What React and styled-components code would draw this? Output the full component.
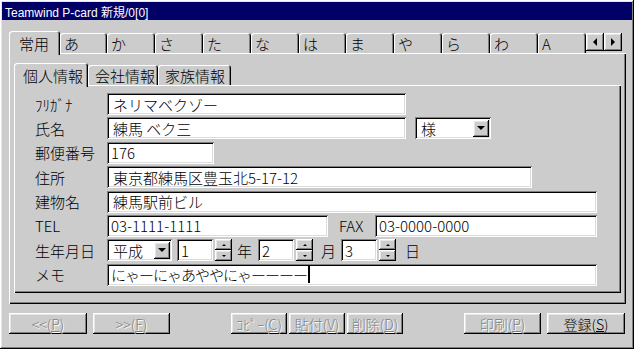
import React from "react";
import styled, { createGlobalStyle } from "styled-components";

const colors = {
  face: "#cccccc",
  light: "#ffffff",
  shadow: "#808080",
  dark: "#000000",
  title: "#000066",
};

const raised = `inset -1px -1px ${colors.dark}, inset 1px 1px ${colors.light}, inset -2px -2px ${colors.shadow}, inset 2px 2px #e6e6e6`;
const sunken = `inset 1px 1px ${colors.shadow}, inset -1px -1px ${colors.light}, inset 2px 2px ${colors.dark}, inset -2px -2px #dcdcdc`;
const panelEdge = `inset 1px 1px ${colors.light}, inset -1px -1px ${colors.dark}, inset -2px -2px ${colors.shadow}`;

const GlobalStyle = createGlobalStyle`
  body {
    margin: 0;
    background: ${colors.face};
    font-family: "Noto Sans CJK JP", "Noto Sans", sans-serif;
    font-weight: 300;
  }
`;

const Window = styled.div`
  width: 634px;
  height: 349px;
  box-sizing: border-box;
  padding: 2px;
  background: ${colors.face};
  box-shadow: ${raised};
  display: flex;
  flex-direction: column;
`;

const TitleBar = styled.div`
  height: 18px;
  flex: 0 0 18px;
  background: ${colors.title};
  color: white;
  font-family: "Liberation Sans", "Noto Sans CJK JP", sans-serif;
  font-weight: 400;
  font-size: 12px;
  display: flex;
  align-items: center;
  padding-left: 3px;
`;

const Body = styled.div`
  flex: 1;
  padding: 11px 6px 0 7px;
  display: flex;
  flex-direction: column;
`;

const TabStrip = styled.div`
  display: flex;
  align-items: flex-end;
  height: 22px;
  flex: 0 0 22px;
`;

const Tab = styled.div`
  box-sizing: border-box;
  width: ${(p) => p.$w}px;
  flex: 0 0 ${(p) => p.$w}px;
  height: ${(p) => (p.$active ? 24 : 20)}px;
  margin-bottom: ${(p) => (p.$active ? -2 : 0)}px;
  padding-left: ${(p) => p.$pad}px;
  padding-top: ${(p) => (p.$active ? 0 : 1)}px;
  display: flex;
  align-items: center;
  font-size: 15px;
  line-height: 1;
  color: #000;
  background: ${colors.face};
  position: relative;
  z-index: ${(p) => (p.$active ? 2 : 1)};
  border-radius: 3px 3px 0 0;
  box-shadow: inset 1px 1px ${colors.light}, inset -1px 0 ${colors.dark},
    inset -2px 0 ${colors.shadow};
`;

const ArrowPair = styled.div`
  display: flex;
  align-self: flex-start;
  margin-top: 2px;
`;

const SmallButton = styled.div`
  box-sizing: border-box;
  width: ${(p) => p.$w}px;
  height: ${(p) => p.$h}px;
  background: ${colors.face};
  box-shadow: ${raised};
  display: flex;
  align-items: center;
  justify-content: center;
  flex: 0 0 auto;
`;

const Panel = styled.div`
  box-sizing: border-box;
  height: ${(p) => p.$h}px;
  flex: 0 0 ${(p) => p.$h}px;
  padding: ${(p) => p.$pad};
  box-shadow: ${panelEdge};
  display: flex;
  flex-direction: column;
`;

const Form = styled.div`
  display: flex;
  flex-direction: column;
  gap: 2.4px;
`;

const Row = styled.div`
  display: flex;
  align-items: center;
  height: 22px;
`;

const Label = styled.div`
  width: ${(p) => p.$w}px;
  flex: 0 0 ${(p) => p.$w}px;
  margin-left: ${(p) => p.$ml || 0}px;
  font-size: ${(p) => p.$size || 15}px;
  line-height: 1;
  color: #000;
`;

const Field = styled.div`
  box-sizing: border-box;
  width: ${(p) => p.$w}px;
  flex: 0 0 ${(p) => p.$w}px;
  height: ${(p) => p.$h || 22}px;
  margin-left: ${(p) => p.$ml || 0}px;
  padding-left: ${(p) => p.$pl || 6}px;
  background: white;
  box-shadow: ${sunken};
  display: flex;
  align-items: center;
  font-size: 15px;
  line-height: 1;
  letter-spacing: ${(p) => p.$ls || 0}px;
  color: #000;
  white-space: nowrap;
  overflow: hidden;
`;

const FieldText = styled.span`
  flex: 1;
`;

const Caret = styled.span`
  display: inline-block;
  width: 2px;
  height: 17px;
  background: #000;
  margin-left: 1px;
  vertical-align: middle;
`;

const DropButton = styled(SmallButton)`
  margin-right: 2px;
`;

const Spinner = styled.div`
  display: flex;
  flex-direction: column;
  margin-left: 2px;
  height: 22px;
`;

const ButtonBar = styled.div`
  display: flex;
  justify-content: space-between;
  margin-top: 9px;
  padding-right: 1px;
`;

const Group = styled.div`
  display: flex;
  gap: ${(p) => p.$gap}px;
`;

const PushButton = styled.div`
  box-sizing: border-box;
  width: ${(p) => p.$w}px;
  height: 21px;
  background: ${colors.face};
  box-shadow: ${raised};
  display: flex;
  align-items: center;
  justify-content: center;
  font-size: 14px;
  line-height: 1;
  padding-top: 1px;
  color: ${(p) => (p.$disabled ? colors.shadow : "#000")};
  text-shadow: ${(p) => (p.$disabled ? "1px 1px 0 #fff" : "none")};
  white-space: nowrap;

  u {
    text-underline-offset: 1px;
  }
`;

const Tri = ({ dir, size = 4 }) => {
  const s = size;
  const pts = {
    left: `${s},0 ${s},${s * 2} 0,${s}`,
    right: `0,0 0,${s * 2} ${s},${s}`,
    down: `0,0 ${s * 2},0 ${s},${s}`,
    up: `0,${s} ${s * 2},${s} ${s},0`,
  }[dir];
  const w = dir === "left" || dir === "right" ? s : s * 2;
  const h = dir === "left" || dir === "right" ? s * 2 : s;
  return (
    <svg width={w} height={h} viewBox={`0 0 ${w} ${h}`}>
      <polygon points={pts} fill="#000" />
    </svg>
  );
};

const kanaTabs = [
  { label: "常用", w: 51, pad: 10, active: true },
  { label: "あ", w: 47 },
  { label: "か", w: 48 },
  { label: "さ", w: 48 },
  { label: "た", w: 48 },
  { label: "な", w: 48 },
  { label: "は", w: 47 },
  { label: "ま", w: 48 },
  { label: "や", w: 48 },
  { label: "ら", w: 48 },
  { label: "わ", w: 48 },
  { label: "A", w: 48 },
];

const infoTabs = [
  { label: "個人情報", w: 74, pad: 9, active: true },
  { label: "会社情報", w: 70, pad: 7 },
  { label: "家族情報", w: 73, pad: 7 },
];

const SpinBox = ({ value, ml }) => (
  <>
    <Field $w={36} $ml={ml} $pl={4}>
      {value}
    </Field>
    <Spinner>
      <SmallButton $w={17} $h={11}>
        <Tri dir="up" size={2} />
      </SmallButton>
      <SmallButton $w={17} $h={11}>
        <Tri dir="down" size={2} />
      </SmallButton>
    </Spinner>
  </>
);

const Combo = ({ value, w, ml }) => (
  <Field $w={w} $ml={ml}>
    <FieldText>{value}</FieldText>
    <DropButton $w={16} $h={17}>
      <Tri dir="down" size={4} />
    </DropButton>
  </Field>
);

export default function App() {
  return (
    <>
      <GlobalStyle />
      <Window>
        <TitleBar>Teamwind P-card 新規/0[0]</TitleBar>
        <Body>
          <TabStrip>
            {kanaTabs.map((t) => (
              <Tab key={t.label} $w={t.w} $pad={t.pad || 4} $active={t.active}>
                {t.label}
              </Tab>
            ))}
            <ArrowPair>
              <SmallButton $w={18} $h={18}>
                <Tri dir="left" size={4} />
              </SmallButton>
              <SmallButton $w={18} $h={18}>
                <Tri dir="right" size={4} />
              </SmallButton>
            </ArrowPair>
          </TabStrip>

          <Panel $h={251} $pad="10px 5px 0 5px">
            <TabStrip>
              {infoTabs.map((t) => (
                <Tab key={t.label} $w={t.w} $pad={t.pad} $active={t.active}>
                  {t.label}
                </Tab>
              ))}
            </TabStrip>
            <Panel $h={208} $pad="8px 0 0 21px">
              <Form>
                <Row>
                  <Label $w={72} $size={15}>ﾌﾘｶﾞﾅ</Label>
                  <Field $w={299}>ネリマベクゾー</Field>
                </Row>
                <Row>
                  <Label $w={72}>氏名</Label>
                  <Field $w={299}>練馬 ベク三</Field>
                  <Combo value="様" w={76} ml={9} />
                </Row>
                <Row>
                  <Label $w={72}>郵便番号</Label>
                  <Field $w={107} $pl={4}>176</Field>
                </Row>
                <Row>
                  <Label $w={72}>住所</Label>
                  <Field $w={425}>東京都練馬区豊玉北5-17-12</Field>
                </Row>
                <Row>
                  <Label $w={72}>建物名</Label>
                  <Field $w={490}>練馬駅前ビル</Field>
                </Row>
                <Row>
                  <Label $w={72}>TEL</Label>
                  <Field $w={221} $pl={4}>03-1111-1111</Field>
                  <Label $w={36} $ml={11}>FAX</Label>
                  <Field $w={222} $pl={4}>03-0000-0000</Field>
                </Row>
                <Row>
                  <Label $w={72}>生年月日</Label>
                  <Combo value="平成" w={65} />
                  <SpinBox value="1" ml={5} />
                  <Label $w={21} $ml={5}>年</Label>
                  <SpinBox value="2" />
                  <Label $w={20} $ml={8}>月</Label>
                  <SpinBox value="3" />
                  <Label $w={20} $ml={9}>日</Label>
                </Row>
                <Row>
                  <Label $w={72}>メモ</Label>
                  <Field $w={490} $pl={4} $ls={-1}>
                    にゃーにゃあややにゃーーーー
                    <Caret />
                  </Field>
                </Row>
              </Form>
            </Panel>
          </Panel>

          <ButtonBar>
            <Group $gap={6}>
              <PushButton $w={78} $disabled>
                &lt;&lt;(<u>P</u>)
              </PushButton>
              <PushButton $w={77} $disabled>
                &gt;&gt;(<u>F</u>)
              </PushButton>
            </Group>
            <Group $gap={2}>
              <PushButton $w={56} $disabled>
                ｺﾋﾟｰ(<u>C</u>)
              </PushButton>
              <PushButton $w={56} $disabled>
                貼付(<u>V</u>)
              </PushButton>
              <PushButton $w={56} $disabled>
                削除(<u>D</u>)
              </PushButton>
            </Group>
            <Group $gap={6}>
              <PushButton $w={77} $disabled>
                印刷(<u>P</u>)
              </PushButton>
              <PushButton $w={78}>
                登録(<u>S</u>)
              </PushButton>
            </Group>
          </ButtonBar>
        </Body>
      </Window>
    </>
  );
}
